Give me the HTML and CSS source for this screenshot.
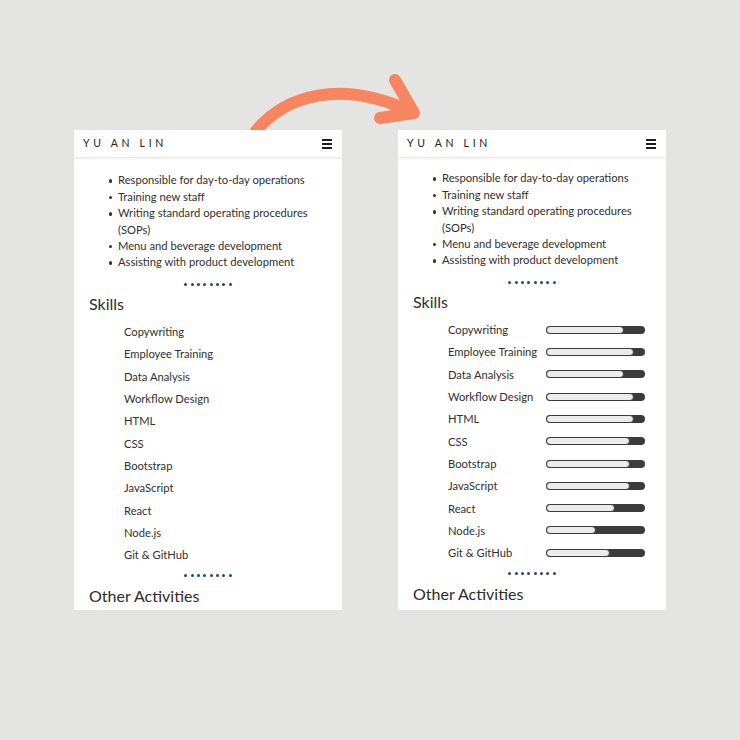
FILE: index.html
```html
<!DOCTYPE html>
<html lang="en">
<head>
<meta charset="utf-8">
<title>Yu An Lin – skills bars</title>
<link rel="stylesheet" href="styles.css">
</head>
<body>
<div class="stage">
  <section class="card">
    <header class="topbar">
      <span class="brand">YU AN LIN</span>
      <span class="burger"><i></i><i></i><i></i></span>
    </header>
    <div class="viewport">
      <div class="content">
        <ul class="duties">
          <li>Responsible for day-to-day operations</li>
          <li>Training new staff</li>
          <li>Writing standard operating procedures (SOPs)</li>
          <li>Menu and beverage development</li>
          <li>Assisting with product development</li>
        </ul>
        <div class="dots"><i></i><i></i><i></i><i></i><i></i><i></i><i></i><i></i></div>
        <h2 class="title">Skills</h2>
        <ul class="skills">
          <li>Copywriting</li>
          <li>Employee Training</li>
          <li>Data Analysis</li>
          <li>Workflow Design</li>
          <li>HTML</li>
          <li>CSS</li>
          <li>Bootstrap</li>
          <li>JavaScript</li>
          <li>React</li>
          <li>Node.js</li>
          <li>Git &amp; GitHub</li>
        </ul>
        <div class="dots"><i></i><i></i><i></i><i></i><i></i><i></i><i></i><i></i></div>
        <h2 class="title">Other Activities</h2>
      </div>
    </div>
  </section>

  <section class="card">
    <header class="topbar">
      <span class="brand">YU AN LIN</span>
      <span class="burger"><i></i><i></i><i></i></span>
    </header>
    <div class="viewport">
      <div class="content content--shifted">
        <ul class="duties">
          <li>Responsible for day-to-day operations</li>
          <li>Training new staff</li>
          <li>Writing standard operating procedures (SOPs)</li>
          <li>Menu and beverage development</li>
          <li>Assisting with product development</li>
        </ul>
        <div class="dots"><i></i><i></i><i></i><i></i><i></i><i></i><i></i><i></i></div>
        <h2 class="title">Skills</h2>
        <ul class="skills skills--bars">
          <li><span class="label">Copywriting</span><span class="bar"><span class="fill" style="width:79%"></span></span></li>
          <li><span class="label">Employee Training</span><span class="bar"><span class="fill" style="width:89%"></span></span></li>
          <li><span class="label">Data Analysis</span><span class="bar"><span class="fill" style="width:79%"></span></span></li>
          <li><span class="label">Workflow Design</span><span class="bar"><span class="fill" style="width:89%"></span></span></li>
          <li><span class="label">HTML</span><span class="bar"><span class="fill" style="width:89%"></span></span></li>
          <li><span class="label">CSS</span><span class="bar"><span class="fill" style="width:85%"></span></span></li>
          <li><span class="label">Bootstrap</span><span class="bar"><span class="fill" style="width:85%"></span></span></li>
          <li><span class="label">JavaScript</span><span class="bar"><span class="fill" style="width:85%"></span></span></li>
          <li><span class="label">React</span><span class="bar"><span class="fill" style="width:70%"></span></span></li>
          <li><span class="label">Node.js</span><span class="bar"><span class="fill" style="width:51%"></span></span></li>
          <li><span class="label">Git &amp; GitHub</span><span class="bar"><span class="fill" style="width:65%"></span></span></li>
        </ul>
        <div class="dots"><i></i><i></i><i></i><i></i><i></i><i></i><i></i><i></i></div>
        <h2 class="title">Other Activities</h2>
      </div>
    </div>
  </section>
</div>

<svg class="arrow" width="740" height="740" viewBox="0 0 740 740" aria-hidden="true">
  <path d="M256 131 C 285 96, 340 78, 412 112" fill="none" stroke="#f7855f" stroke-width="12" stroke-linecap="round"/>
  <path d="M395 80 L 414 113 L 380 118" fill="none" stroke="#f7855f" stroke-width="12" stroke-linecap="round" stroke-linejoin="round"/>
</svg>
</body>
</html>
```

FILE: styles.css
```css
* { box-sizing: border-box; }

html, body {
  margin: 0;
  padding: 0;
}

body {
  width: 740px;
  height: 740px;
  background: #e4e4e2;
  font-family: Lato, "Noto Sans", sans-serif;
  color: #2f2f2f;
  position: relative;
  overflow: hidden;
}

.stage {
  display: flex;
  gap: 56px;
  padding: 130px 0 0 74px;
}

.card {
  width: 268px;
  height: 480px;
  background: #fff;
  display: flex;
  flex-direction: column;
  overflow: hidden;
}

.topbar {
  flex: none;
  height: 27px;
  display: flex;
  align-items: center;
  justify-content: space-between;
  padding: 0 9px 0 9px;
  background: #fff;
  position: relative;
  z-index: 1;
  box-shadow: 0 1px 3px rgba(0, 0, 0, 0.13);
}

.brand {
  font-size: 10.5px;
  letter-spacing: 3.7px;
  color: #222;
  line-height: 1;
}

.burger {
  display: flex;
  flex-direction: column;
  gap: 2px;
  width: 10px;
  margin-right: 1px;
}

.burger i {
  display: block;
  height: 2px;
  background: #1e1e1e;
}

.viewport {
  flex: 1;
  overflow: hidden;
}

.content {
  padding-top: 15.4px;
}

.content--shifted {
  padding-top: 13.4px;
}

.duties {
  list-style: none;
  margin: 0;
  padding: 0 22px 0 44px;
  font-size: 11.2px;
  line-height: 16.4px;
}

.duties li {
  position: relative;
}

.duties li::before {
  content: "";
  position: absolute;
  left: -9px;
  top: 7px;
  width: 3.4px;
  height: 3.4px;
  border-radius: 50%;
  background: #333;
}

.dots {
  display: flex;
  justify-content: center;
  gap: 3.4px;
  margin-top: 12px;
}

.dots i {
  width: 3px;
  height: 3px;
  border-radius: 50%;
  background: #1d4d5b;
}

.title {
  margin: 8.5px 0 0 15px;
  font-size: 16px;
  line-height: 20px;
  font-weight: 400;
  color: #2c2c2c;
}

.skills {
  list-style: none;
  margin: 6.8px 0 0;
  padding: 0 0 0 50px;
  font-size: 11.2px;
  line-height: 22.3px;
}

.skills + .dots {
  margin-top: 8px;
}

.dots + .title {
  margin-top: 8.5px;
}

.skills--bars li {
  display: flex;
  align-items: center;
}

.label {
  width: 98px;
  flex: none;
  white-space: nowrap;
}

.bar {
  width: 99px;
  height: 8px;
  border-radius: 4px;
  background: #3b3b3b;
  display: flex;
  margin-top: -1px;
}

.fill {
  height: 100%;
  border: 1.5px solid #3b3b3b;
  border-radius: 4px;
  background: #ececec;
}

.arrow {
  position: absolute;
  left: 0;
  top: 0;
  pointer-events: none;
}
```
